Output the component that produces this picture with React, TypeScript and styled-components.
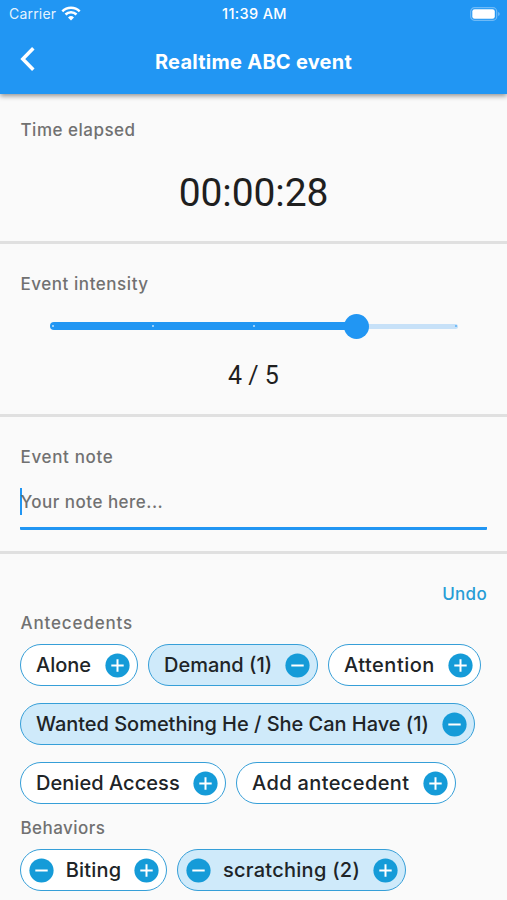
import React from 'react';
import styled, { createGlobalStyle } from 'styled-components';

const GlobalStyle = createGlobalStyle`
  *, *::before, *::after { box-sizing: border-box; }
  body {
    margin: 0;
    background: #fafafa;
    font-family: Inter, "Liberation Sans", sans-serif;
  }
`;

const Screen = styled.div`
  display: flex;
  flex-direction: column;
  height: 900px;
  overflow: hidden;
  background: #fafafa;
`;

const Header = styled.header`
  position: relative;
  flex: none;
  height: 94px;
  background: #2196f3;
  color: #fff;
  box-shadow: 0 2px 5px rgba(0, 0, 0, 0.42);
`;

const StatusBar = styled.div`
  display: grid;
  grid-template-columns: 1fr auto 1fr;
  align-items: center;
  height: 28px;
  padding: 0 7px 0 9px;
  font-size: 14px;
  line-height: 28px;
`;

const Carrier = styled.div`
  display: flex;
  align-items: center;
  gap: 5px;
  letter-spacing: 0.2px;
  color: rgba(255, 255, 255, 0.9);
`;

const WifiIcon = styled.svg`
  margin-top: -2px;
`;

const Clock = styled.span`
  font-size: 14.5px;
  font-weight: 500;
  letter-spacing: 0.35px;
`;

const Battery = styled.svg`
  justify-self: end;
  margin-top: -1px;
`;

const TitleBar = styled.div`
  display: grid;
  grid-template-columns: 60px 1fr 60px;
  align-items: center;
  height: 66px;
`;

const BackButton = styled.button`
  display: flex;
  align-items: center;
  width: 60px;
  height: 48px;
  margin-top: -4px;
  padding: 0 0 0 19px;
  border: 0;
  background: none;
  color: #fff;
`;

const Title = styled.h1`
  margin: 2px 0 0;
  text-align: center;
  font-size: 20px;
  line-height: 26px;
  font-weight: 700;
  letter-spacing: 0.26px;
`;

const Section = styled.section<{ $height: number; $top: number }>`
  flex: none;
  height: ${(p) => p.$height}px;
  padding: ${(p) => p.$top}px 20px 0;
  border-bottom: 3px solid #e0e0e0;
`;

const Label = styled.h2<{ $tracking: number }>`
  margin: 0;
  padding-left: 0.5px;
  font-size: 17px;
  line-height: 22px;
  font-weight: 500;
  letter-spacing: ${(p) => p.$tracking}px;
  color: #717171;
`;

const Timer = styled.div`
  margin-top: 28px;
  text-align: center;
  font: 400 39px/48px Roboto, sans-serif;
  letter-spacing: -0.1px;
  color: #1f1f1f;
`;

const Slider = styled.div`
  display: flex;
  align-items: center;
  height: 26px;
  margin: 18px 29px 0 29.5px;
`;

const Track = styled.div`
  position: relative;
  display: flex;
  align-items: center;
  width: 408px;
  height: 8px;
`;

const Filled = styled.div`
  width: 306px;
  height: 8px;
  border-radius: 4px;
  background: #2196f3;
`;

const Remaining = styled.div`
  flex: 1;
  height: 5px;
  border-radius: 0 3px 3px 0;
  background: #c7e1f8;
`;

const Tick = styled.i<{ $at: number; $dark?: boolean }>`
  position: absolute;
  top: 3px;
  left: ${(p) => p.$at}px;
  width: 2px;
  height: 2px;
  border-radius: 1px;
  background: ${(p) => (p.$dark ? '#5bb0f6' : '#bfe0fb')};
`;

const Thumb = styled.div`
  position: absolute;
  top: -8.5px;
  left: 294px;
  width: 25px;
  height: 25px;
  border-radius: 50%;
  background: #2196f3;
`;

const Score = styled.div`
  margin-top: 22px;
  text-align: center;
  font: 400 25px/30px Roboto, sans-serif;
  color: #1f1f1f;
`;

const NoteField = styled.div`
  display: flex;
  align-items: center;
  height: 46px;
  margin-top: 16px;
  padding-bottom: 8px;
  border-bottom: 3px solid #2196f3;
  border-radius: 1px;
`;

const Caret = styled.span`
  width: 2px;
  height: 27px;
  margin-right: -1.5px;
  background: #2196f3;
`;

const Placeholder = styled.span`
  font-size: 17px;
  line-height: 22px;
  font-weight: 500;
  letter-spacing: 0.48px;
  color: #717171;
`;

const Events = styled.section`
  display: flex;
  flex-direction: column;
  padding: 29px 20px 0;
`;

const Undo = styled.button`
  align-self: flex-end;
  height: 22px;
  margin-bottom: 7px;
  padding: 0;
  border: 0;
  background: none;
  font: 500 17px/22px Inter, sans-serif;
  letter-spacing: 0.3px;
  color: #279dd6;
`;

const Chips = styled.div`
  display: flex;
  flex-wrap: wrap;
  gap: 17px 10px;
  margin: 10px -10px 13px 0;
`;

const ChipBox = styled.div<{ $width: number; $active: boolean; $leading: boolean }>`
  display: flex;
  align-items: center;
  justify-content: space-between;
  width: ${(p) => p.$width}px;
  height: 42px;
  padding: 0 7.5px 0 ${(p) => (p.$leading ? 7.5 : 15)}px;
  border: 1px solid #369fd8;
  border-radius: 21px;
  background: ${(p) => (p.$active ? '#cfeafa' : '#fff')};
`;

const ChipText = styled.span<{ $tracking: number }>`
  font-size: 20px;
  line-height: 26px;
  font-weight: 500;
  letter-spacing: ${(p) => p.$tracking}px;
  white-space: nowrap;
  color: #202427;
`;

const RoundIcon = styled.svg`
  flex: none;
  width: 25px;
  height: 25px;
`;

function Round({ plus }: { plus?: boolean }) {
  return (
    <RoundIcon viewBox="0 0 25 25">
      <circle cx="12.5" cy="12.5" r="12.1" fill="#159bd8" />
      <path d={plus ? 'M6.3 12.5h12.4M12.5 6.3v12.4' : 'M6.3 12.5h12.4'} stroke="#fff" strokeWidth="2" />
    </RoundIcon>
  );
}

type ChipData = { text: string; width: number; tracking: number; active?: boolean; leading?: boolean; minus?: boolean };

const antecedents: ChipData[] = [
  { text: 'Alone', width: 118, tracking: 0 },
  { text: 'Demand (1)', width: 170, tracking: 0, active: true, minus: true },
  { text: 'Attention', width: 153, tracking: 0.5 },
  { text: 'Wanted Something He / She Can Have (1)', width: 455, tracking: -0.03, active: true, minus: true },
  { text: 'Denied Access', width: 206, tracking: 0.05 },
  { text: 'Add antecedent', width: 220, tracking: 0.38 },
];

const behaviors: ChipData[] = [
  { text: 'Biting', width: 147, tracking: 0.15, leading: true },
  { text: 'scratching (2)', width: 229, tracking: 0.27, active: true, leading: true },
];

function Chip({ text, width, tracking, active = false, leading = false, minus }: ChipData) {
  return (
    <ChipBox $width={width} $active={active} $leading={leading}>
      {leading && <Round />}
      <ChipText $tracking={tracking}>{text}</ChipText>
      <Round plus={!minus} />
    </ChipBox>
  );
}

export default function App() {
  return (
    <Screen>
      <GlobalStyle />
      <Header>
        <StatusBar>
          <Carrier>
            Carrier
            <WifiIcon width="20" height="15" viewBox="0 0 20 15" fill="none" stroke="#fff" strokeWidth="2.5">
              <path d="M1.3 5.3a12.4 12.4 0 0 1 17.4 0M4.5 8.5a7.8 7.8 0 0 1 11 0" />
              <path d="M10 14.5l-3-3a4.3 4.3 0 0 1 6 0z" fill="#fff" stroke="none" />
            </WifiIcon>
          </Carrier>
          <Clock>11:39 AM</Clock>
          <Battery width="30" height="14" viewBox="0 0 30 14">
            <rect x="0.7" y="0.7" width="26" height="12.6" rx="3.8" fill="none" stroke="#fff" strokeOpacity="0.35" strokeWidth="1.2" />
            <rect x="2.3" y="2.3" width="22.5" height="9.4" rx="2.3" fill="#fff" />
            <path d="M28.2 5v4q1.5-.6 1.5-2t-1.5-2z" fill="#fff" fillOpacity="0.4" />
          </Battery>
        </StatusBar>
        <TitleBar>
          <BackButton aria-label="Back">
            <svg width="18" height="26" viewBox="0 0 18 26" fill="none" stroke="#fff" strokeWidth="3.5">
              <path d="M14.3 2.3L3.8 13l10.5 10.7" />
            </svg>
          </BackButton>
          <Title>Realtime ABC event</Title>
        </TitleBar>
      </Header>
      <Section $height={150} $top={25}>
        <Label $tracking={0.5}>Time elapsed</Label>
        <Timer>00:00:28</Timer>
      </Section>
      <Section $height={173} $top={29}>
        <Label $tracking={0.55}>Event intensity</Label>
        <Slider>
          <Track>
            <Filled />
            <Remaining />
            <Tick $at={2} />
            <Tick $at={102.5} />
            <Tick $at={203.5} />
            <Tick $at={405} $dark />
            <Thumb />
          </Track>
        </Slider>
        <Score>4 / 5</Score>
      </Section>
      <Section $height={137} $top={29}>
        <Label $tracking={0.65}>Event note</Label>
        <NoteField>
          <Caret />
          <Placeholder>Your note here...</Placeholder>
        </NoteField>
      </Section>
      <Events>
        <Undo>Undo</Undo>
        <Label $tracking={0.85}>Antecedents</Label>
        <Chips>
          {antecedents.map((c) => <Chip key={c.text} {...c} />)}
        </Chips>
        <Label $tracking={0.45}>Behaviors</Label>
        <Chips>
          {behaviors.map((c) => <Chip key={c.text} {...c} />)}
        </Chips>
      </Events>
    </Screen>
  );
}
